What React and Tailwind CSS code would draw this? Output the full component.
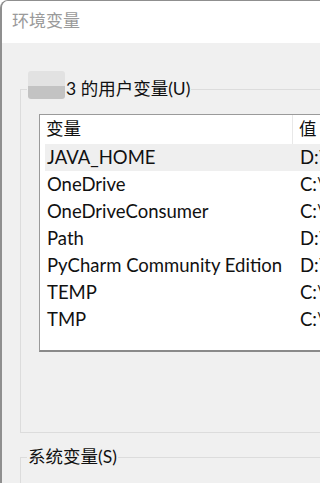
import React from "react";

const rows = [
  { name: "JAVA_HOME", value: "D:\\", selected: true },
  { name: "OneDrive", value: "C:\\" },
  { name: "OneDriveConsumer", value: "C:\\" },
  { name: "Path", value: "D:\\" },
  { name: "PyCharm Community Edition", value: "D:\\" },
  { name: "TEMP", value: "C:\\" },
  { name: "TMP", value: "C:\\" },
];

const ui = {
  fontFamily: 'Lato, "Noto Sans CJK SC", sans-serif',
};

export default function App() {
  return (
    <div
      className="w-[320px] h-[483px] overflow-hidden bg-[#f0f0f0] border-l-2 border-t border-[#8f8f8f] rounded-tl-[8px] text-[#111]"
      style={ui}
    >
      {/* title bar */}
      <div className="h-[42px] bg-white pl-[10px] pt-[8px] text-[17px] leading-[24px] text-[#9a9a9a]">
        环境变量
      </div>

      <div className="pl-[18px] pt-[36px]">
        {/* user variables */}
        <fieldset className="w-[340px] border border-[#dcdcdc] pb-[80px]">
          <legend className="relative ml-[6px] px-[1px] text-[17.5px] leading-[20px]">
            <span className="absolute left-[1px] top-[-8px] w-[37px] h-[28px] rounded-[3px] bg-[linear-gradient(#e2e2e2_0%,#e2e2e2_52%,#c3c3c3_52%,#c3c3c3_100%)]"></span>
            <span className="pl-[38px]">3 的用户变量(U)</span>
          </legend>

          <div className="ml-[18px] mt-[15px] h-[238px] bg-white border border-[#9a9a9a] border-b-2 border-b-[#8a8a8a]">
            <div className="flex h-[29px] items-center text-[17.5px]">
              <div className="w-[253px] h-full flex items-center pl-[6px] border-r border-[#e8e8e8]">
                变量
              </div>
              <div className="pl-[6px]">值</div>
            </div>
            {rows.map((r) => (
              <div
                key={r.name}
                className={`flex h-[27px] items-center ml-[5px] text-[18.5px] ${r.selected ? "bg-[#efefef]" : ""}`}
              >
                <div className="w-[255px] pl-[2px] whitespace-nowrap">{r.name}</div>
                <div>{r.value}</div>
              </div>
            ))}
          </div>
        </fieldset>

        {/* system variables */}
        <fieldset className="w-[340px] mt-[14px] border border-[#dcdcdc] h-[60px]">
          <legend className="ml-[6px] px-[1px] text-[17.5px] leading-[20px]">
            系统变量(S)
          </legend>
        </fieldset>
      </div>
    </div>
  );
}
